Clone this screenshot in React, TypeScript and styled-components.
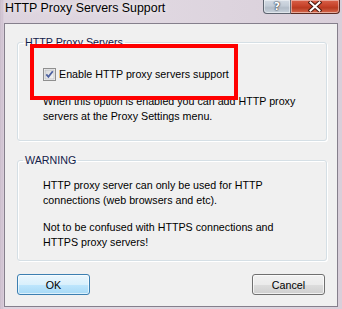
import React from 'react';
import styled, { createGlobalStyle } from 'styled-components';

const GlobalStyle = createGlobalStyle`
  html, body {
    margin: 0;
    padding: 0;
  }
  body {
    width: 342px;
    height: 309px;
    overflow: hidden;
    font-family: 'Liberation Sans', Arial, sans-serif;
  }
`;

const Window = styled.div`
  position: relative;
  width: 342px;
  height: 309px;
  box-sizing: border-box;
  display: flex;
  flex-direction: column;
  background:
    linear-gradient(90deg, #bfb1c1 0, #d8cdd9 1px, #cdbfcf 2px, #ddd3de 4px, #e0d8e1 40%, #d9cfda 100%);
`;

const TitleBar = styled.div`
  height: 23px;
  display: flex;
  align-items: flex-start;
  padding: 0 2px 0 5px;
  flex-shrink: 0;
`;

const Title = styled.div`
  margin-top: 1px;
  font-size: 12.4px;
  line-height: 15px;
  color: #000;
  text-shadow: 0 0 6px rgba(255, 255, 255, 0.9);
`;

const CaptionButtons = styled.div`
  margin-left: auto;
  display: flex;
`;

const CaptionButton = styled.div<{ $close?: boolean }>`
  box-sizing: border-box;
  height: 14px;
  width: ${(p) => (p.$close ? '49px' : '28px')};
  border: 1px solid ${(p) => (p.$close ? '#5b2a22' : '#5e6470')};
  border-top: none;
  border-left: ${(p) => (p.$close ? 'none' : '1px solid #5e6470')};
  border-radius: ${(p) => (p.$close ? '0 0 4px 0' : '0 0 0 4px')};
  background: ${(p) =>
    p.$close
      ? 'linear-gradient(180deg, #d8624a 0%, #c7432a 45%, #b93a20 60%, #d66a4e 100%)'
      : 'linear-gradient(180deg, #d4dbe4 0%, #c3ccd7 45%, #b2bcc8 60%, #c9d2dc 100%)'};
  box-shadow: inset 0 0 0 1px rgba(255, 255, 255, 0.45);
  display: flex;
  align-items: flex-start;
  justify-content: center;
`;

const HelpGlyph = styled.span`
  font-family: 'DejaVu Sans', sans-serif;
  font-weight: bold;
  font-size: 11px;
  line-height: 11px;
  color: #fff;
  margin-top: 1px;
  text-shadow: 0 0 1px #3a4250, 0 0 1px #3a4250, 0 0 2px #3a4250;
`;

const Client = styled.div`
  flex: 1;
  margin: 0 4px 2px 4px;
  border: 1px solid #857f8c;
  background: #f0f0f0;
  display: flex;
  flex-direction: column;
  padding: 0 10px 0 12px;
`;

const Group = styled.fieldset<{ $top: number; $pt: number; $pb: number }>`
  margin: ${(p) => p.$top}px 0 0 0;
  padding: ${(p) => p.$pt}px 10px ${(p) => p.$pb}px 25px;
  min-width: 0;
  border: 1px solid #d5dfe5;
  border-radius: 3px;
  box-shadow: inset 1px 1px 0 #fff, 1px 1px 0 #fff;
`;

const GroupLabel = styled.legend`
  margin-left: -20px;
  padding: 0 2px;
  font-size: 10.7px;
  line-height: 15px;
  color: #13214a;
`;

const Text = styled.p<{ $gap?: boolean }>`
  margin: ${(p) => (p.$gap ? '12px' : '0')} 0 0 0;
  font-size: 10.7px;
  line-height: 15px;
  color: #000;
`;

const CheckRow = styled.label`
  display: flex;
  align-items: center;
  gap: 3px;
  height: 15px;
  font-size: 10.7px;
  line-height: 15px;
  color: #000;
`;

const CheckBox = styled.span`
  width: 13px;
  height: 13px;
  display: block;
  flex-shrink: 0;
`;

const ButtonRow = styled.div`
  margin-top: 13px;
  display: flex;
  justify-content: space-between;
  padding-right: 2px;
`;

const Button = styled.button<{ $focused?: boolean }>`
  width: 73px;
  height: 21px;
  box-sizing: border-box;
  padding: 0;
  border-radius: 3px;
  font-family: 'Liberation Sans', Arial, sans-serif;
  font-size: 10.7px;
  color: #000;
  border: 1px solid ${(p) => (p.$focused ? '#3c7fb1' : '#707070')};
  background: ${(p) =>
    p.$focused
      ? 'linear-gradient(180deg, #eaf6fd 0%, #d9f0fc 50%, #bee6fd 51%, #a7d9f5 100%)'
      : 'linear-gradient(180deg, #f2f2f2 0%, #ebebeb 50%, #dddddd 51%, #cfcfcf 100%)'};
  box-shadow: inset 0 0 0 1px ${(p) => (p.$focused ? 'rgba(255,255,255,0.6)' : 'rgba(255,255,255,0.7)')};
`;

const Highlight = styled.div`
  position: absolute;
  left: 30px;
  top: 44px;
  width: 208px;
  height: 56px;
  box-sizing: border-box;
  border: 4px solid #f00;
  pointer-events: none;
`;

const CloseIcon = () => (
  <svg width="14" height="11" viewBox="0 0 14 11" style={{ marginTop: 1 }}>
    <path d="M2.5 1.5 L11.5 9.5 M11.5 1.5 L2.5 9.5" stroke="#4a1a10" strokeWidth="4" strokeLinecap="square" />
    <path d="M2.5 1.5 L11.5 9.5 M11.5 1.5 L2.5 9.5" stroke="#fff" strokeWidth="2" strokeLinecap="square" />
  </svg>
);

const CheckIcon = () => (
  <CheckBox>
    <svg width="13" height="13" viewBox="0 0 13 13">
      <defs>
        <linearGradient id="cbg" x1="0" y1="0" x2="1" y2="1">
          <stop offset="0" stopColor="#d8d8d8" />
          <stop offset="1" stopColor="#f6f6f6" />
        </linearGradient>
      </defs>
      <rect x="0.5" y="0.5" width="12" height="12" fill="#f4f4f4" stroke="#8f8f8f" />
      <rect x="2" y="2" width="9" height="9" fill="url(#cbg)" stroke="#aeb3b9" strokeWidth="0.6" />
      <path d="M3.3 6.4 L5.4 8.8 L9.8 3.2" fill="none" stroke="#4d61a0" strokeWidth="1.8" />
    </svg>
  </CheckBox>
);

const App: React.FC = () => {
  return (
    <>
      <GlobalStyle />
      <Window>
        <TitleBar>
          <Title>HTTP Proxy Servers Support</Title>
          <CaptionButtons>
            <CaptionButton>
              <HelpGlyph>?</HelpGlyph>
            </CaptionButton>
            <CaptionButton $close>
              <CloseIcon />
            </CaptionButton>
          </CaptionButtons>
        </TitleBar>
        <Client>
          <Group $top={11} $pt={17} $pb={16}>
            <GroupLabel>HTTP Proxy Servers</GroupLabel>
            <CheckRow>
              <CheckIcon />
              Enable HTTP proxy servers support
            </CheckRow>
            <Text $gap>
              When this option is enabled you can add HTTP proxy
              <br />
              servers at the Proxy Settings menu.
            </Text>
          </Group>
          <Group $top={12} $pt={10} $pb={10}>
            <GroupLabel>WARNING</GroupLabel>
            <Text>
              HTTP proxy server can only be used for HTTP
              <br />
              connections (web browsers and etc).
            </Text>
            <Text $gap>
              Not to be confused with HTTPS connections and
              <br />
              HTTPS proxy servers!
            </Text>
          </Group>
          <ButtonRow>
            <Button $focused>OK</Button>
            <Button>Cancel</Button>
          </ButtonRow>
        </Client>
        <Highlight />
      </Window>
    </>
  );
};

export default App;
